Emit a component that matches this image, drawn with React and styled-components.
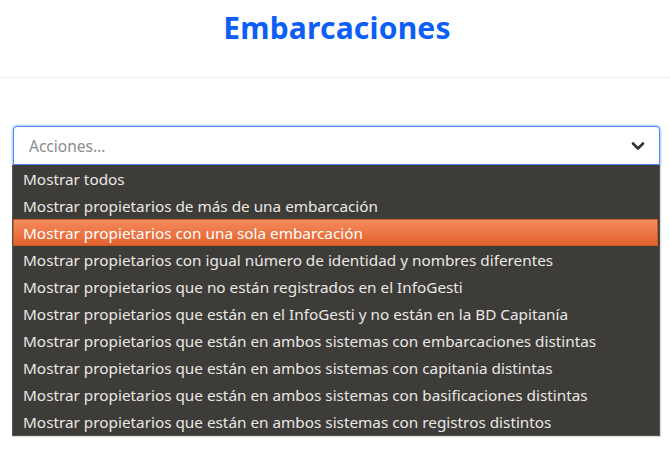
import React from "react";
import styled, { createGlobalStyle } from "styled-components";

const Global = createGlobalStyle`
  html, body { margin: 0; padding: 0; background: #ffffff; }
  body { font-family: "Noto Sans", "DejaVu Sans", sans-serif; }
`;

const Page = styled.div`
  width: 670px;
  min-height: 453px;
  background: #fff;
`;

const Header = styled.header`
  height: 77px;
  box-sizing: content-box;
  border-bottom: 1px solid #ececec;
  display: flex;
  align-items: flex-start;
  justify-content: center;
`;

const Title = styled.h1`
  margin: 0;
  padding-top: 7px;
  padding-left: 4px;
  line-height: 42px;
  font-family: "Noto Sans", sans-serif;
  font-weight: 700;
  font-size: 30px;
  color: #0d5ef8;
  letter-spacing: 0.2px;
`;

const Content = styled.main`
  padding: 48px 10px 0 12px;
`;

const SelectBox = styled.div`
  position: relative;
`;

const Control = styled.div`
  margin-left: 1px;
  height: 37px;
  border: 1px solid #4d86f7;
  border-radius: 4px 4px 0 0;
  box-shadow: 0 0 0 1.5px #c6d8fc;
  display: flex;
  align-items: center;
  justify-content: space-between;
  padding: 0 14px 0 15px;
  background: #fff;
`;

const Placeholder = styled.span`
  font-size: 15.5px;
  color: #8b8b8b;
`;

const Chevron = styled.svg`
  width: 14px;
  height: 10px;
  display: block;
`;

const Menu = styled.ul`
  list-style: none;
  margin: 0;
  padding: 0;
  background: #3d3c38;
  border: 1px solid #55544f;
  border-top: none;
  box-shadow: 1px 1px 1px rgba(0, 0, 0, 0.15);
`;

const Item = styled.li`
  height: 27px;
  box-sizing: border-box;
  display: flex;
  align-items: center;
  padding-left: 9px;
  font-size: 15.3px;
  color: ${(p) => (p.$active ? "#ffffff" : "#eae8e5")};
  white-space: nowrap;
  border: 1px solid ${(p) => (p.$active ? "#c95b2d" : "transparent")};
  background: ${(p) =>
    p.$active ? "linear-gradient(to bottom, #f58a5d, #e4622e)" : "transparent"};
  margin-right: 1px;
`;

const options = [
  "Mostrar todos",
  "Mostrar propietarios de más de una embarcación",
  "Mostrar propietarios con una sola embarcación",
  "Mostrar propietarios con igual número de identidad y nombres diferentes",
  "Mostrar propietarios que no están registrados en el InfoGesti",
  "Mostrar propietarios que están en el InfoGesti y no están en la BD Capitanía",
  "Mostrar propietarios que están en ambos sistemas con embarcaciones distintas",
  "Mostrar propietarios que están en ambos sistemas con capitania distintas",
  "Mostrar propietarios que están en ambos sistemas con basificaciones distintas",
  "Mostrar propietarios que están en ambos sistemas con registros distintos",
];

export default function App() {
  return (
    <Page>
      <Global />
      <Header>
        <Title>Embarcaciones</Title>
      </Header>
      <Content>
        <SelectBox>
          <Control>
            <Placeholder>Acciones...</Placeholder>
            <Chevron viewBox="0 0 14 10">
              <path
                d="M2 2.5 L7 7.5 L12 2.5"
                fill="none"
                stroke="#343434"
                strokeWidth="2.6"
                strokeLinecap="round"
                strokeLinejoin="round"
              />
            </Chevron>
          </Control>
          <Menu>
            {options.map((o, i) => (
              <Item key={i} $active={i === 2}>
                {o}
              </Item>
            ))}
          </Menu>
        </SelectBox>
      </Content>
    </Page>
  );
}
